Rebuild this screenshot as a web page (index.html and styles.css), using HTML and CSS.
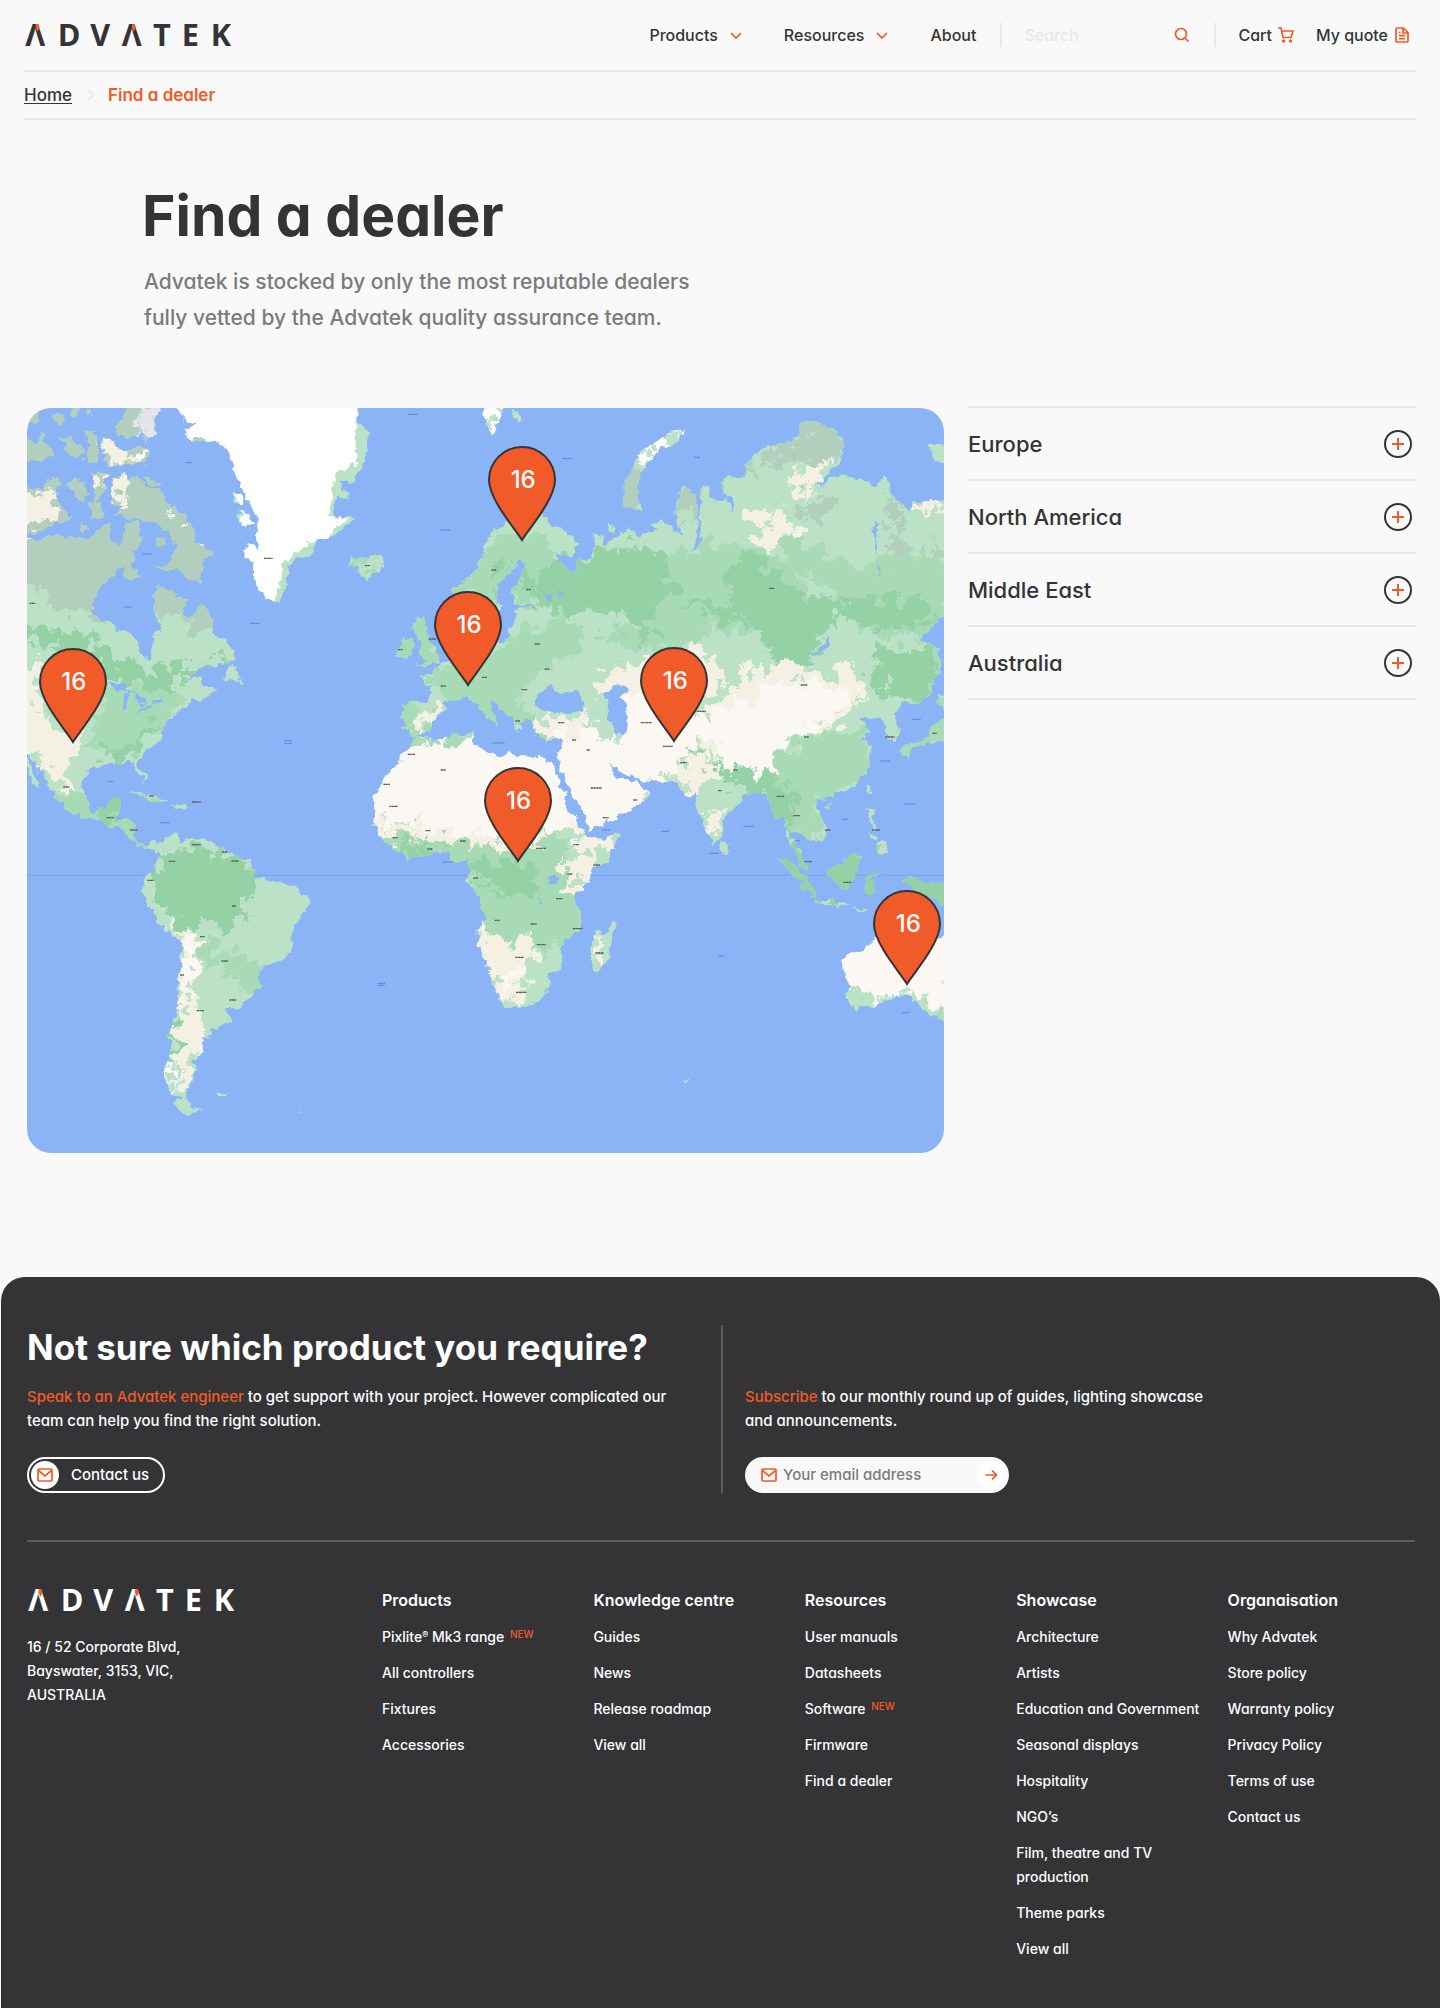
FILE: index.html
```html
<!DOCTYPE html>
<html lang="en">
<head>
  <meta charset="UTF-8">
  <meta name="viewport" content="width=device-width, initial-scale=1.0">
  <title>Find a dealer | Advatek</title>
  <link rel="stylesheet" href="styles.css">
</head>
<body>

  <!-- shared icons -->
  <svg class="sprite" aria-hidden="true">
    <symbol id="icon-chevron" viewBox="0 0 16 16"><path d="M3 6l5 5 5-5"/></symbol>
    <symbol id="icon-search" viewBox="0 0 16 16"><circle cx="7" cy="7" r="5.500"/><path d="M11 11l3.500 3.500"/></symbol>
    <symbol id="icon-cart" viewBox="0 0 16 16"><path d="M0 1h3l2 9.500h8l2-6.500H4"/><circle cx="5.500" cy="14" r=".8"/><circle cx="12.500" cy="14" r=".8"/></symbol>
    <symbol id="icon-quote" viewBox="0 0 16 16"><path d="M3 1h6.500L14 5.500V14a1 1 0 0 1-1 1H3a1 1 0 0 1-1-1V2a1 1 0 0 1 1-1zM9 1.500V6h4.500M5 5.500h1.500M5 8.700h6M5 11.700h6"/></symbol>
    <symbol id="icon-mail" viewBox="0 0 16 16"><rect x="1" y="2" width="14" height="12" rx="1"/><path d="M1.500 3.500L8 9l6.500-5.500"/></symbol>
    <symbol id="icon-arrow" viewBox="0 0 16 16"><path d="M2.500 8h11M9 3.500L13.500 8 9 12.500"/></symbol>
    <symbol id="icon-pin" viewBox="0 0 68 96"><path d="M34 94C29 85 1 54 1 34a33 33 0 0 1 66 0c0 20-28 51-33 60z"/></symbol>
  </svg>

  <header class="site-header">
    <div class="navbar">
      <a class="logo" href="#" aria-label="Advatek">
        <svg viewBox="72 75 618 66">
          <text y="141" x="106 207 301 395 486 571 663">ΛDVΛTEK</text>
          <path class="accent" d="M108 75h7l4 12-7 11-6-14zM397 75h7l4 12-7 11-6-14z"/>
        </svg>
      </a>
      <nav class="main-nav">
        <button class="nav-drop">Products <svg class="icon"><use href="#icon-chevron"/></svg></button>
        <button class="nav-drop">Resources <svg class="icon"><use href="#icon-chevron"/></svg></button>
        <a class="nav-about" href="#">About</a>
        <form class="search">
          <input type="search" placeholder="Search" aria-label="Search">
          <button type="submit" aria-label="Search"><svg class="icon"><use href="#icon-search"/></svg></button>
        </form>
        <a class="nav-icon" href="#">Cart <svg class="icon"><use href="#icon-cart"/></svg></a>
        <a class="nav-icon" href="#">My quote <svg class="icon"><use href="#icon-quote"/></svg></a>
      </nav>
    </div>
    <nav class="breadcrumb" aria-label="Breadcrumb">
      <a href="#">Home</a>
      <svg class="icon"><use href="#icon-chevron"/></svg>
      <span>Find a dealer</span>
    </nav>
  </header>

  <main>
    <section class="intro">
      <h1>Find a dealer</h1>
      <p>Advatek is stocked by only the most reputable dealers fully vetted by the Advatek quality assurance team.</p>
    </section>

    <section class="dealers">
      <div class="map">
        <svg class="map-art" viewBox="21 24 2751 2235" preserveAspectRatio="xMidYMid slice" role="img" aria-label="World map">
          <defs>
            <filter id="coast" x="0" y="0" width="1" height="1">
              <feTurbulence type="fractalNoise" baseFrequency="0.035" numOctaves="3" seed="4"/>
              <feDisplacementMap in="SourceGraphic" scale="32" xChannelSelector="R" yChannelSelector="G"/>
            </filter>
            <filter id="mottle" x="0" y="0" width="1" height="1">
              <feTurbulence type="fractalNoise" baseFrequency="0.022" numOctaves="5" seed="9"/>
              <feDisplacementMap in="SourceGraphic" scale="130" xChannelSelector="R" yChannelSelector="G"/>
            </filter>
            <clipPath id="land">
              <!-- North America -->
              <path d="M-40 400L60 420 110 405 150 415 200 420 240 380 270 370 275 420 300 440 320 360 355 365 368 420 335 450 350 480 300 510 270 530 245 560 222 600 222 640 250 665 300 690 355 720 360 755 385 782 395 760 390 730 418 690 412 650 400 640 405 560 440 560 495 600 495 640 520 650 545 610 575 660 580 700 640 745 640 775 600 795 555 800 520 820 490 850 530 830 555 830 545 860 590 870 540 905 510 905 480 935 445 955 425 990 420 1020 370 1060 355 1085 380 1140 372 1145 350 1110 345 1088 290 1090 240 1095 200 1110 190 1140 190 1180 210 1215 225 1235 260 1225 270 1200 305 1193 300 1220 285 1255 325 1255 348 1275 342 1310 350 1330 380 1335 400 1325 415 1340 408 1350 375 1345 345 1330 320 1305 300 1285 265 1275 235 1262 205 1255 150 1235 115 1210 100 1180 70 1130 40 1080 25 1065-40 1060zM21 1075l19 35 20 55-15-10-20-45z"/>
              <path d="M325 240l25-12 25 17v25h45l30 40 45 40 25 30v40l55 30v20l-25 10-5 75-45-20-30-30-40 5-25-10 55-20 5-40-25-40-40-40-60-5-55-10 25-25zM285 235l35-13 5 28-15 50 8 20-43-5v-45zM218 215l47 5-15 60-20 20-15-50zM208 305l32-5 10 60h-35zM140 250l35-15 30 45-20 30-35-35zM-20 255l95 10 15-35 28 5-8 65 45 55-45 10-35 25-35 10-60-5zM245 110l30 15 25 20h85l-5 45-120 5zM355 0h75l-25 60-5 40-25 25-13-35zM285 90l35-60 35-30 5 110h-60zM120 110l30 5 40 20v40l-40-10zM-20 130l80-5 5-25 15 30 25 30-45 20-80 15zM-20 0l75 25v35l-75 10zM200 90h25l15 50-5 45-30-5zM105 40l20 10-5 30-15-10zM320 480l20 25 20 25-30 10-18-20zM180 370l30 15-20 18zM415 415l20 5-5 20-15-5zM370 228l35 10 20 20-35 5zM150 24l30 0-5 20-25 5zM195 24l20 0 5 20-20 5z"/>
              <path d="M610 840l25-60 15 35 22 35-32-5zM330 1180l35-8 75 33-25 5-35-20zM455 1215l25-7 25 14-30 6z"/>
              <!-- Greenland, Iceland -->
              <path d="M468-10v34l22 31 50 15-50 15 20 40 55-3 45 18 20 30 15 35 15 45 25 50 25 45v55l5 50-35-20v40l20 30 10 60 30 35 44 26 7-56 25-80 50-15 30-55 50-10 60-50-60-5-10-20 15-40 35 10-25-50 45-5 20-45 25-100-35-40 5-70zM645 270l25 20-5 25-20-10zM655 335l30 5 10 35-35-5zM985 465l25 15 65-18 22 33-52 42-40-17 10-15-25-15z"/>
              <!-- South America -->
              <path d="M410 1340l30-30 30-10 5 25 25-13 45 8 35 2 20 23 40 20 50 15 15 35-5 15 60 10 60 18 25 24 20 5 2 33-42 55-5 55-20 45-60 20-20 20-2 40-28 35-35 40-40-8 17 33-22 25-38 5v27l-27 3 8 20-18 35-17 15 15 25-23 40-12 25 2 25-20-5-25-10-20-45-2-40 17-30v-70l15-70 10-60 7-90 5-50-17-15-45-35-25-50-32-52 7-48 25-20 12-35zM460 2105l30-10 50 41-45 9-30-30zM590 2082l30-6-5 9-22 5zM840 2125l16 10-4 2z"/>
              <!-- British Isles, Svalbard, Novaya Zemlya -->
              <path d="M1185 655l30-5 5 30-5 20 25 40 18 25-3 25-65 8 25-23-20-10 10-30-25-45zM1150 715l30 5-5 45-40 10 5-35zM1385-10h60l-5 60-20 55-25-35zM1475 30h20l10 20-15 15zM1985 90l-15 35-60 35-40 50-25 50 20 75-45-15-15-30 25-70 30-60 60-45zM1762 383a10 10 0 1 0 20 0 10 10 0 1 0-20 0zM2725 130l70 10v45l-55 0z"/>
              <!-- Europe and Asia -->
              <path d="M1150 990l-5-80 35-5 50 5v-50l-35-30 45-15 25-25 35-15 30-35 10-50 30 10 15 30 55-5 25-10 5-35 20-30-10-10 25-20 55-15-60 7-20-12-5-30 25-40 15-40-25-10-15 30-40 40-5 50 10 25-20 35-20 40-25-10-25-50-50-30-2-40 52-40 35-60 15-50 40-45 60-30h70l20 30 50 15 45 50-25 30-60-15 20 35 40 30 20-40 40-20 5-60 20 10 5 25 50-35 30-10 20 15 55-15-10-25 35 5 30 15 30 30-20-45-5-50 20-55h35l10 35 5 70-5 50-15 40 25-30 5-40-5-30 5-50-5-50 15-5 10 45 55-5 25 45-5-40-30-25 2-40 68-7-5-43 45-35 90-25 40-55 40-10 70 45 10 45-10 40-40 35-40 45 50-40h70l70 30 15-30 25 10 10 50 50 40 10-30 60 10 60-40v370l-50 20-50 60 40 15 20 15-5 70-25 60-50 35-30-10-30 45 20 35-5 40-35-5-5-50-35-15-45 5 35 30-20 20 25 40-5 50-50 60-70 30-45 10 25 60 15 40-45 30-30-30-30-15-10 25 40 60 20 40-30-10-20-50-20-30-5-70-35 0-10-30-20-40-50 5-70 75-5 50-25 28-30-58-20-60-5-50-25 20-25-40-75-7-40-3-20-15-40-10-35-25 15 30 30 20 40 5 35 30-15 35-50 30-110 50-10-40-50-70-30-80-5-40 10-20v-20l-65-5-20-25-20-5-30 15-15-40-45-50-20-10 10 40 20 40-40-30-40-50-20-15-65 20v20l-35 35v25l-50 25z"/>
              <!-- Africa, Madagascar -->
              <path d="M1185 1010l55 10 50-15 68-5 2 40 40 15 40 20 25-15 45 5 50 7 35 13 25 65 30 80 20 40 40 40 20 10 60-20 5 10-25 60-50 40-55 80 15 50v50l-60 50 5 60-30 20-5 40-55 55-75 10-20-25-35-80-5-40-25-40-5-40 20-40-5-50-40-70v-55h-45l-10-25h-50l-80 18-50-43-30-25-20-35 10-45-10-30 40-80 40-30 5-30 35-30zM1780 1565l5 35-30 100-35 10-8-50 8-55 40-10z"/>
              <!-- South East Asia, Japan, Australia -->
              <path d="M2270 1370l40 15 60 55 15 50-25-10-40-50zM2385 1495l55 5 50 15-50 3-50-13zM2500 1520h45l-10 8h-30zM2420 1410l30-10 50-45 25 15-15 50-20 45-55-15zM2530 1430l60-15-40 20 10 15 5 35-20 0zM2540 1225l20 5-5 40 20 20h-20zM2560 1340l30-20 15 30-20 20zM2545 1300l30 10-10 15zM2545 1150h12l-10 40-10-10zM2412 1215l22-5-10 18zM2104 1325l16 10v27l-16 0zM2650 1435l50 5 90 20v70l-50-30-60-30zM2640 1050l30-20 50-10 20-40 50-30v70l-50 10-40 5-40 35zM2750 900l40-30v60zM2470 1670l60-20 40-40 50-30 80-10 50 50 50-20v290l-50-35-40-25-10-15-30-25h-40l-70 25-50 15-25-15v-55l-20-60zM1984 2038l16 0-2 8-12 0z"/>
            </clipPath>
          </defs>
          <rect class="sea" x="0" y="0" width="2800" height="2280"/>
          <path class="equator" d="M0 1426h2800"/>
          <g filter="url(#coast)">
            <g clip-path="url(#land)">
              <rect class="plain" x="-100" y="-100" width="3000" height="2500"/>
              <g filter="url(#mottle)">
                <path class="tundra" d="M-60-60h660v620l-40 140-60-60H400l-150 20-50-30-100-20-40-40-100-30zM390 540h110l60 60 40 100-50 10-50-50-110-10zM2170 190l160-70 70-100 90 110-50 70-140-20-50 30zM2600 260l50 70-10 70 40 100-60-20-10-100zM2720 400l60 60v150zM1985 260h45l-10 110-20-10zM2330 310l90-30 20 40-40 50-40-20zM2000 540l80-60 60 20-40 60zM1790 220l80-20 0 150-80 0z"/>
                <path class="wood" d="M240 850l240 30-60 110-80 90H220l10-130zM60 1180h360v170H60zM540 1610l80 30 100 60-10 80-50 0-20-60-80-20zM1060 1285l190 35 170 10 80-40h120l20 70 60 40-30 80 20 120-90 50-100-10-120-30-30-170-290-70zM1160 1000l200-10-60 35-80 15-60 50zM1280 570l160-170 120-20 60 90-60 130-120 20zM1200 820l240-80 200-100 80 70-80 60-160 120 100 80-140 60-120-120zM1130 650h130v150h-130zM2250 1080l150-70 150-10 10 120-120 70-60 10 40 100-40 40-80-40-20-80-50-40zM2380 500l400-40v170l-80 90-140-20-110-80zM1880 470l300-50 120 60 100 160-100 60-420-40zM2280 420l140 20 40 100-140-20zM1120 900h80v110h-80zM2730 1840h60v60h-60zM2740 600h40v480h-140v-60zM980 460l60 10-10 60-40-10zM1730 700l150-40 200 20-60 60-200 20z"/>
                <path class="forest" d="M-40 650l140 50 100 0 80 60 100 50 100-10 120-20 20 20-140 50-50 30-50-20-80-10-40-20-80-50-100-50-120-10zM430 960l-100 120H230l10-30 60 0 80-70zM430 1360l110-20 150 50 10 40-10 50-10 80-40 30-80-30-40 40-80-40-40-80V1420zM465 1800l13 60-8 130-30 0 10-90zM1345 1385h105l110 15-5 70-105 10-50-30-55-10zM1540 560l90-100 190-20 100 20 30 80-50 120-20 100-30-10-10-80-80-30-160 0-60-20zM2170 440l90 70 80 80h140l-60 110-60 100-80 0-60-80-60-80-40-70 20-60zM2420 590h280l50 50-90 60-170-40zM2560 750l190-10-20 140-70 20-100-40zM1420 530l70-60-40 100-20 60zM1490 540h110l40 100-80-40zM2000 1000l80 80 100 50 70-20-10 70-80 0-140-100zM2230 1140l90 20-10 130-60-30zM2260 1340h340v160h-340zM2640 1410h150v130h-150zM270 1190h40v80h-60zM1200 1330l80 0-100 60-70-50zM2000 600l140 20 40 50-120-20z"/>
                <path class="steppe" d="M-60 780l120 10 10 60-20 50 30 60 70 20 40 10-20 70-20 40 10 95-30-35-30-50-60-40-100-10zM368 1480l72 90 60 20 45 30-5 80-20 50-20 60 20 40 40 30 15 35-45 65-20 120-40-20 5-220-5-260zM1040 1270l200 20 240 20 100 0-40 30-140-10-160-10-240-30zM1640 1280l155 20-95 120-40 60-20-50-20-50 80-10-10-40zM1350 1570l50 40 130 10 30 40-40 40v60l-40 60-40-10-80-170zM1550 950h170v60h-160zM1710 840l70-40 70-10 30-10 120-30 80 20 40 60-40 50-80 50-150 20-110-50-10-40zM2030 960l170-160 100-10 100 50 100-40 30 40-70 130-160 60-60 80h-100l-90-70zM1980 1100l80-40 50 70-110 60zM1180 920h60v50l-40 15zM2330 200l110-25-40 55-40 60-50-30zM2190 350l100-5 40 55-30 40-70-10zM2060 1220l50 30-20 60-30-40zM275 220h55l-15 100h-40zM-20 290l90-10 20-50 20 80-60 90-80-10zM218 215h40l-10 40-30 10zM2500 900l50-20-20 50zM1735 1610l30 0-20 80-20 0zM240 110l50 0 40 80-60 0zM2670 310l100 0 0 30-90-10z"/>
                <path class="desert" d="M1100 1030l300-10 240 30 70 240-70 0-80 10-60-20-80 30-100-10-90-10-100-20-110 5v-180zM1600 1000l120-10 80 20 20-130 80-10 100 60 80 20-20 50-60 60-10 60-90 30-20 100-180 50-100-200zM2200 840l200 20 90 0-20 60-70 50-90 50-50 50-20 50-60 0-80-50-50-60 30-70 110-40zM490 1610l50 10-10 120-45 50zM2440 1560h360v280l-60-10-60-40-80 0-60 0-80-50-40 0zM1430 1720l80-30-20 80-40 20z"/>
                <path class="ice" d="M445 1990h15l-5 100-10-30zM330 145h60v45l-60 0zM440 330l40 20-15 20zM510 420l30 20-10 15zM1050 500l25 5-15 15zM1385-10h60l-5 110-45 0zM2000 80l-40 50-60 20-45 60-20-10 30-50 60-50z"/>
                <path class="snow" d="M355-10h75l-20 140-50-20z"/>
              </g>
              <path class="ice" d="M440-30h590l-20 90 0 130-60 30-30 120 60 20-60 50-60 20-70 60-30 130-80-40-15-220-30-150-80-100-140 20z"/>
              <path class="sea" d="M265 845l50 10 20 20-50-5zM305 890l5 40 10-10 10-45zM335 870l40 20v30l-20-20zM350 935l40-20 10 5-40 20zM395 900h30v10h-30zM1545 920l15-50 40-10 20 20 40-10 30 40v25h-70l-30 5zM1750 880l40-25 30 5-5 25-15 5 25 40-5 70h-40l-15-60zM2360 775l60-30 5-40-30 45zM1583 1425h28v28h-28zM1500 965l30-10 8 40-25 10zM1560 1480l6 40-4 0zM2570 500l15 30-3 0-20-80 0-60 10-40 3 0-8 70zM1580 580h15v20h-15zM1620 570l10 20-8 5z"/>
            </g>
          </g>
          <!-- place markers too small to read at this zoom -->
          <path class="marks" d="M732 475h26M1035 497h16M28 610h18M130 1161h18M1134 749h14M1226 717h22M1262 858h16M1386 832h16M1414 510h16M1518 569h16M1544 732h16M1486 963h14M1504 869h18M1574 807h14M1614 968h20M1656 1020h12M1700 1050h10M1862 968h34M1928 1039h30M1980 1088h20M2030 934h28M2248 565h14M2342 855h20M2352 1011h14M2596 1011h28M2738 1000h12M1163 1063h22M1262 1110h16M1090 1153h20M1108 1219h26M1216 1292h16M1320 1323h18M1118 1313h16M1222 1347h16M1360 1434h14M516 1334h26M446 1384h20M606 1356h16M634 1383h22M382 1441h20M636 1518h12M540 1610h14M604 1683h20M628 1800h20M530 1832h22M480 1725h12M260 1253h22M330 1290h24M388 1188h12M516 1206h26M1712 1164h34M1748 1253h18M1840 1200h12M1660 1334h18M1548 1345h30M1720 1395h20M1642 1422h16M1608 1496h20M1658 1586h30M1532 1572h18M1550 1634h28M1486 1672h26M1424 1561h16M1488 1777h32M1726 1659h26M2270 1189h22M2320 1247h20M2416 1290h16M2354 1385h22M2470 1447h24M2556 1290h24M2140 1110h12M2094 1172h12"/>
          <path class="marks sea-marks" d="M1166 43h28M496 188h20M1260 390h32M368 462h28M312 621h24M690 670h28M792 1022h24M794 1030h22M264 1144h16M422 1268h28M1072 1750h24M1074 1756h20M1628 176h28M2022 172h18M1416 1029h38M1268 1386h30M1746 1290h26M1924 1294h24M2170 1279h30M2068 1360h28M2326 1322h14M2466 1258h18M2654 1212h32M2096 1668h18M2646 1838h20M2676 958h26M2580 1083h32"/>
        </svg>
        <button class="pin pin-scandinavia"><svg><use href="#icon-pin"/></svg><span>16</span></button>
        <button class="pin pin-europe"><svg><use href="#icon-pin"/></svg><span>16</span></button>
        <button class="pin pin-america"><svg><use href="#icon-pin"/></svg><span>16</span></button>
        <button class="pin pin-asia"><svg><use href="#icon-pin"/></svg><span>16</span></button>
        <button class="pin pin-africa"><svg><use href="#icon-pin"/></svg><span>16</span></button>
        <button class="pin pin-australia"><svg><use href="#icon-pin"/></svg><span>16</span></button>
      </div>

      <div class="regions">
        <button class="region">Europe <span class="plus"></span></button>
        <button class="region">North America <span class="plus"></span></button>
        <button class="region">Middle East <span class="plus"></span></button>
        <button class="region">Australia <span class="plus"></span></button>
      </div>
    </section>
  </main>

  <footer>
    <div class="cta">
      <div class="cta-contact">
        <h2>Not sure which product you require?</h2>
        <p><a href="#">Speak to an Advatek engineer</a> to get support with your project. However complicated our team can help you find the right solution.</p>
        <a class="contact-button" href="#"><span class="dot"><svg class="icon"><use href="#icon-mail"/></svg></span>Contact us</a>
      </div>
      <div class="cta-subscribe">
        <p><a href="#">Subscribe</a> to our monthly round up of guides, lighting showcase and announcements.</p>
        <form class="subscribe">
          <svg class="icon"><use href="#icon-mail"/></svg>
          <input type="email" placeholder="Your email address" aria-label="Your email address">
          <button class="dot" type="submit" aria-label="Subscribe"><svg class="icon"><use href="#icon-arrow"/></svg></button>
        </form>
      </div>
    </div>

    <div class="footer-links">
      <div>
        <a class="logo" href="#" aria-label="Advatek">
          <svg viewBox="72 75 618 66">
            <text y="141" x="106 207 301 395 486 571 663">ΛDVΛTEK</text>
            <path class="accent" d="M108 75h7l4 12-7 11-6-14zM397 75h7l4 12-7 11-6-14z"/>
          </svg>
        </a>
        <address>16 / 52 Corporate Blvd,<br>Bayswater, 3153, VIC,<br>AUSTRALIA</address>
      </div>
      <div>
        <h3>Products</h3>
        <ul>
          <li><a href="#">Pixlite<sup>®</sup> Mk3 range</a> <span class="new">NEW</span></li>
          <li><a href="#">All controllers</a></li>
          <li><a href="#">Fixtures</a></li>
          <li><a href="#">Accessories</a></li>
        </ul>
      </div>
      <div>
        <h3>Knowledge centre</h3>
        <ul>
          <li><a href="#">Guides</a></li>
          <li><a href="#">News</a></li>
          <li><a href="#">Release roadmap</a></li>
          <li><a href="#">View all</a></li>
        </ul>
      </div>
      <div>
        <h3>Resources</h3>
        <ul>
          <li><a href="#">User manuals</a></li>
          <li><a href="#">Datasheets</a></li>
          <li><a href="#">Software</a> <span class="new">NEW</span></li>
          <li><a href="#">Firmware</a></li>
          <li><a href="#">Find a dealer</a></li>
        </ul>
      </div>
      <div>
        <h3>Showcase</h3>
        <ul>
          <li><a href="#">Architecture</a></li>
          <li><a href="#">Artists</a></li>
          <li><a href="#">Education and Government</a></li>
          <li><a href="#">Seasonal displays</a></li>
          <li><a href="#">Hospitality</a></li>
          <li><a href="#">NGO’s</a></li>
          <li><a href="#">Film, theatre and TV production</a></li>
          <li><a href="#">Theme parks</a></li>
          <li><a href="#">View all</a></li>
        </ul>
      </div>
      <div>
        <h3>Organaisation</h3>
        <ul>
          <li><a href="#">Why Advatek</a></li>
          <li><a href="#">Store policy</a></li>
          <li><a href="#">Warranty policy</a></li>
          <li><a href="#">Privacy Policy</a></li>
          <li><a href="#">Terms of use</a></li>
          <li><a href="#">Contact us</a></li>
        </ul>
      </div>
    </div>
  </footer>
</body>
</html>
```
FILE: styles.css
```css
:root {
  --dark: #343436;
  --orange: #f15a29;
  --grey: #7b7b7b;
  --line: #e8e8e8;
  --page: #f9f9f9;
}

* {
  box-sizing: border-box;
}

body {
  margin: 0;
  background: var(--page);
  color: var(--dark);
  font-family: Inter, "Liberation Sans", sans-serif;
  font-feature-settings: "cv11";
  font-size: 16px;
  font-weight: 500;
  line-height: 24px;
}

a {
  color: inherit;
  text-decoration: none;
}

button,
input {
  font: inherit;
  font-feature-settings: inherit;
  color: inherit;
  background: none;
  border: none;
  margin: 0;
  padding: 0;
}

button {
  cursor: pointer;
}

h1, h2, h3, p, ul {
  margin: 0;
  padding: 0;
}

ul {
  list-style: none;
}

.sprite {
  position: absolute;
  width: 0;
  height: 0;
}

.icon {
  width: 16px;
  height: 16px;
  flex: none;
  fill: none;
  stroke: var(--orange);
  stroke-width: 1.7;
}

.logo {
  display: block;
  width: 206px;
  height: 22px;
}

.logo svg {
  display: block;
  width: 100%;
  height: 100%;
  overflow: visible;
  fill: currentColor;
}

.logo text {
  font-family: "Open Sans", sans-serif;
  font-size: 92px;
  font-weight: 700;
  text-anchor: middle;
}

.accent {
  fill: var(--orange);
}

/* header */
.site-header {
  padding: 0 24px;
}

.navbar {
  display: flex;
  align-items: center;
  justify-content: space-between;
  height: 72px;
  border-bottom: 2px solid var(--line);
}

.main-nav {
  display: flex;
  align-items: center;
  padding-right: 6px;
}

.nav-drop {
  display: flex;
  align-items: center;
  gap: 10px;
  margin-right: 40px;
}

.nav-about {
  margin-right: 24px;
}

.search {
  display: flex;
  align-items: center;
  height: 24px;
  padding: 0 24px 0 22px;
  margin-right: 22px;
  border-left: 2px solid var(--line);
  border-right: 2px solid var(--line);
}

.search input {
  width: 150px;
  outline: none;
}

.search input::placeholder {
  color: var(--line);
  opacity: 1;
}

.search button {
  display: flex;
}

.nav-icon {
  display: flex;
  align-items: center;
  gap: 6px;
}

.nav-icon + .nav-icon {
  margin-left: 22px;
}

.breadcrumb {
  display: flex;
  align-items: center;
  gap: 10px;
  height: 48px;
  border-bottom: 2px solid var(--line);
  font-size: 17px;
}

.breadcrumb a {
  text-decoration: underline;
  text-underline-offset: 2px;
}

.breadcrumb .icon {
  stroke: var(--line);
  transform: rotate(-90deg);
}

.breadcrumb span {
  color: var(--orange);
  font-weight: 600;
}

/* intro */
.intro {
  padding: 64px 144px 70px 142px;
}

.intro h1 {
  margin-bottom: 16px;
  font-size: 57px;
  font-weight: 700;
  line-height: 64px;
}

.intro p {
  max-width: 580px;
  padding-left: 2px;
  color: var(--grey);
  font-size: 21px;
  line-height: 36px;
}

/* map and regions */
.dealers {
  display: grid;
  grid-template-columns: 1fr 448px;
  align-items: start;
  gap: 24px;
  padding: 0 24px 124px 27px;
}

.map {
  position: relative;
  margin-top: 2px;
  aspect-ratio: 917 / 745;
  border-radius: 24px;
  overflow: hidden;
}

.map-art {
  display: block;
  width: 100%;
  height: 100%;
}

.sea { fill: #8ab4f5; }
.plain { fill: #bbe2c6; }
.tundra { fill: #b2cebc; }
.wood { fill: #a8dab5; }
.forest { fill: #94d2a5; }
.steppe { fill: #f5f0e4; }
.desert { fill: #fbf8f3; }
.ice { fill: #ffffff; }
.snow { fill: #e3e5ea; }

.equator {
  stroke: #7ea6e4;
  stroke-width: 3;
}

.marks {
  fill: none;
  stroke: #55605a;
  stroke-width: 4;
  stroke-dasharray: 7 1;
}

.sea-marks {
  stroke: #4f83d1;
  stroke-width: 3;
}

.pin {
  position: absolute;
  width: 68px;
  height: 96px;
  transform: translate(-50%, -100%);
  color: #ffffff;
  font-size: 24px;
}

.pin svg {
  display: block;
  width: 100%;
  height: 100%;
  fill: var(--orange);
  stroke: var(--dark);
  stroke-width: 2;
}

.pin span {
  position: absolute;
  top: 22px;
  left: 1px;
  width: 100%;
}

.pin-scandinavia { left: 54%; top: 18%; }
.pin-europe { left: 48.1%; top: 37.5%; }
.pin-america { left: 5%; top: 45.1%; }
.pin-asia { left: 70.6%; top: 45%; }
.pin-africa { left: 53.5%; top: 61.1%; }
.pin-australia { left: 96%; top: 77.6%; }

.regions {
  border-top: 2px solid var(--line);
}

.region {
  display: flex;
  align-items: center;
  justify-content: space-between;
  width: 100%;
  height: 73px;
  padding-right: 4px;
  border-bottom: 2px solid var(--line);
  font-size: 22px;
}

.plus {
  width: 28px;
  height: 28px;
  border: 2px solid var(--dark);
  border-radius: 50%;
  background:
    linear-gradient(var(--orange), var(--orange)) center / 12px 2px no-repeat,
    linear-gradient(var(--orange), var(--orange)) center / 2px 12px no-repeat;
}

/* footer */
footer {
  margin-left: 1px;
  padding: 48px 25px 47px 26px;
  background: var(--dark);
  border-radius: 24px 24px 0 0;
  color: #ffffff;
}

.cta {
  display: grid;
  grid-template-columns: 1fr 1fr;
  padding-bottom: 47px;
  border-bottom: 2px solid #5d5d5f;
  font-size: 15px;
}

.cta h2 {
  margin-bottom: 16px;
  font-size: 35px;
  font-weight: 700;
  line-height: 44px;
}

.cta p {
  margin-bottom: 24px;
}

.cta p a {
  color: var(--orange);
}

.cta-contact p {
  max-width: 660px;
}

.cta-subscribe {
  display: flex;
  flex-direction: column;
  justify-content: flex-end;
  align-items: flex-start;
  padding-left: 22px;
  border-left: 2px solid #5d5d5f;
}

.cta-subscribe p {
  max-width: 480px;
}

.contact-button {
  display: inline-flex;
  align-items: center;
  gap: 12px;
  height: 36px;
  padding: 0 14px 0 2px;
  border: 2px solid #ffffff;
  border-radius: 18px;
  vertical-align: top;
}

.dot {
  display: flex;
  align-items: center;
  justify-content: center;
  width: 28px;
  height: 28px;
  border-radius: 50%;
  background: #ffffff;
}

.subscribe {
  display: flex;
  align-items: center;
  gap: 6px;
  width: 264px;
  height: 36px;
  padding: 0 4px 0 16px;
  border-radius: 18px;
  background: var(--page);
  color: var(--dark);
}

.subscribe input {
  flex: 1;
  min-width: 0;
  outline: none;
}

.subscribe input::placeholder {
  color: var(--grey);
  opacity: 1;
}

.footer-links {
  display: grid;
  grid-template-columns: 331px repeat(5, 1fr);
  gap: 24px;
  padding-top: 47px;
  font-size: 14px;
}

.footer-links address {
  margin-top: 24px;
  font-style: normal;
}

.footer-links h3 {
  margin-bottom: 14px;
  font-size: 16px;
  font-weight: 600;
  line-height: 22px;
}

.footer-links li {
  margin-bottom: 12px;
}

.footer-links li:last-child {
  margin-bottom: 0;
}

.footer-links sup {
  font-size: 9px;
  line-height: 9px;
  vertical-align: 4px;
}

.new {
  margin-left: 2px;
  color: var(--orange);
  font-size: 10px;
  line-height: 10px;
  vertical-align: 4px;
}
```
